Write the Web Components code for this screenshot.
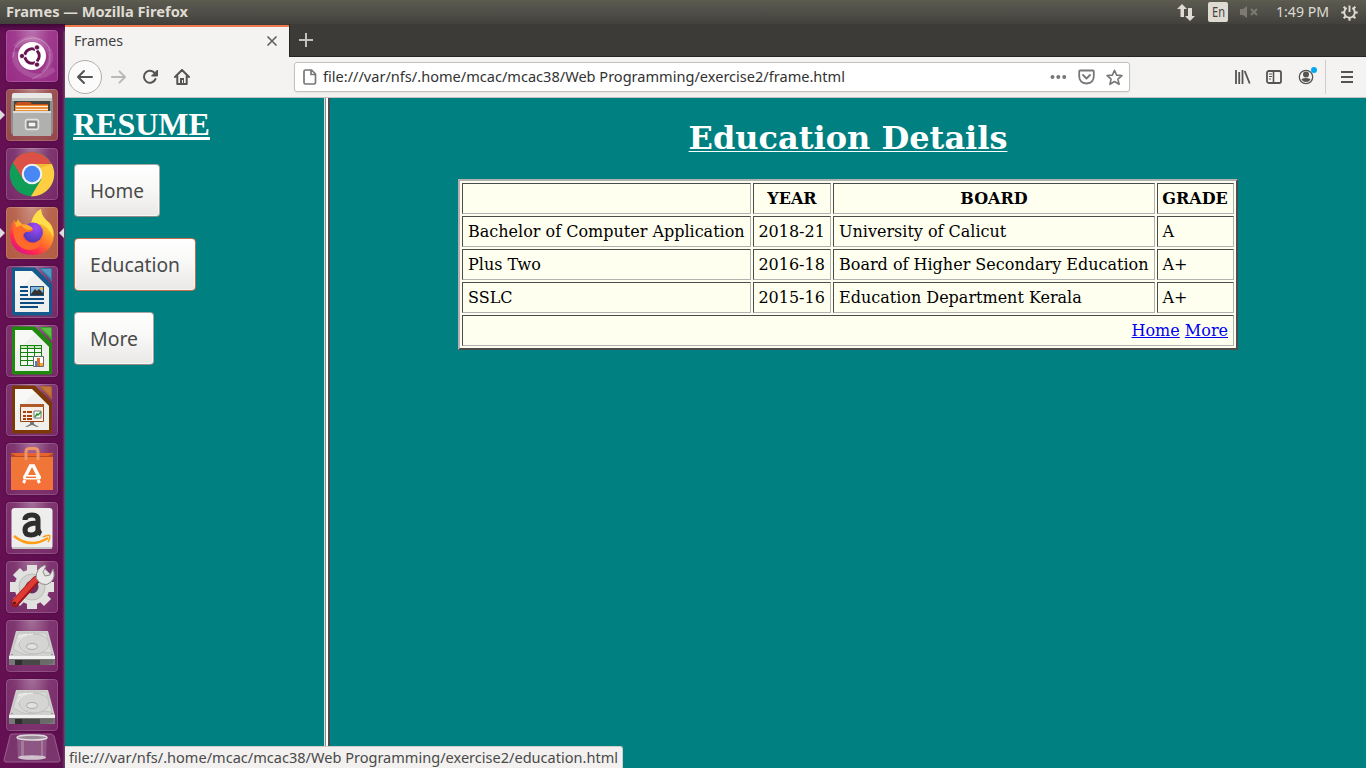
<!DOCTYPE html>
<html lang="en"><head><meta charset="utf-8"><title>Frames</title>
<style>html,body{margin:0;width:1366px;height:768px;overflow:hidden;background:#008080}</style></head>
<body><desktop-screen></desktop-screen>
<script>
function define(name, html, setup){
  const t=document.createElement('template'); t.innerHTML=html;
  customElements.define(name, class extends HTMLElement{
    connectedCallback(){
      if(this.shadowRoot) return;
      this.attachShadow({mode:'open'}).append(t.content.cloneNode(true));
      if(setup) setup(this,this.shadowRoot);
    }
  });
}

/* Label whose natural width is scaled to the width given in "w". */
define('fit-text', `<style>
:host{display:block;font-family:"Noto Sans","Open Sans",sans-serif;white-space:nowrap;flex:none}
span{display:inline-block;transform-origin:0 50%}</style><span><slot></slot></span>`,
(h,r)=>{
  const w=+h.getAttribute('w'), s=r.querySelector('span');
  h.style.width=w+'px';
  const n=s.offsetWidth; if(n) s.style.transform='scaleX('+(w/s.getBoundingClientRect().width)+')';
});

define('top-panel', `<style>
:host{display:flex;align-items:center;height:24px;box-sizing:border-box;padding:0 8px 0 6px;background:linear-gradient(#5f5d50 0,#5a594f 2px,#504f48 50%,#42413b 100%);color:#dfdbd2;font-size:14px}
fit-text{line-height:24px}
.sp{flex:1} svg{display:block;flex:none}
.en{width:20px;height:20px;border-radius:2px;background:#dfdbd2;color:#45443e;font-size:14px;display:flex;justify-content:center;margin:0 12px 0 13px}
.en fit-text{line-height:19px}
.time{margin:0 12px 0 18px;font-size:14px}
</style>
<fit-text w="182" style="font-weight:700">Frames — Mozilla Firefox</fit-text><div class="sp"></div>
<svg width="18" height="18" viewBox="0 0 18 18" fill="#dfdbd2"><path d="M5 1 10 6H7V14H3.500V6H0zM11 5h4v8h3l-5 5-5-5h3z"/></svg>
<div class="en"><fit-text w="13">En</fit-text></div>
<svg width="18" height="14" viewBox="0 0 18 14" fill="#7c7a72"><path d="M0 4h3l4-3v12l-4-3H0z"/><path d="m11 4 6 6m0-6-6 6" stroke="#7c7a72" stroke-width="2"/></svg>
<fit-text class="time" w="53">1:49 PM</fit-text>
<svg width="17" height="17" viewBox="0 0 18 18" fill="none" stroke="#dfdbd2"><path d="M6 4.300a5.600 5.600 0 1 0 6 0M9 1.500v7" stroke-width="2"/><path d="M2.800 2.800l2 2M15.200 2.800l-2 2M.3 9h3M14.700 9h3M2.800 15.200l2-2M15.200 15.200l-2-2M9 14.700v3" stroke-width="2.200"/></svg>`);

define('launcher-tile', `<style>
:host{display:block;flex:none;position:relative;width:52px;height:52px;box-sizing:border-box;border-radius:4px;background:radial-gradient(ellipse at 50% -5%,rgba(255,255,255,.38),rgba(255,255,255,.12) 48%,rgba(255,255,255,.05) 100%),var(--tint,#6f1c5e);box-shadow:inset 0 0 0 1px rgba(255,255,255,.16),0 0 2px rgba(30,0,30,.35)}
::slotted(svg){display:block;width:52px;height:52px}
.l,.r{display:none;position:absolute;top:21px;border:5px solid transparent}
.l{left:-6px;border-left-color:#ddd;border-right:0}.r{right:-6px;border-right-color:#ddd;border-left:0}
:host([open]) .l,:host([focused]) .r{display:block}
</style><slot></slot><i class="l"></i><i class="r"></i>`);

const drive=`<svg viewBox="0 0 52 52"><path d="M10 11h32l7 26v6q0 2-2 2H5q-2 0-2-2v-6z" fill="#d0d0cf"/><path d="M3 37h46v6q0 2-2 2H5q-2 0-2-2z" fill="#777"/><path d="M3 36h46v3H3z" fill="#f1f1ef"/><path d="M9 40h38v3l-8 2H9z" fill="#6a6a69"/><path d="M9 40h7v5H9z" fill="#2f2f2f"/><path d="M16 40h18v5H16z" fill="#484848"/><path d="M12 13h28l6 20q-9-2-16 1-9 2-15-1L7 29z" fill="#dadad9" stroke="#c2c2c0"/><ellipse cx="28" cy="24" rx="15" ry="10" fill="#d5d5d4" stroke="#c0c0be"/><ellipse cx="26" cy="26.500" rx="5.500" ry="3" fill="#e2e2e1" stroke="#aaa"/><path d="M12 17l9-3M12 23q3-8 15-9" fill="none" stroke="#f3f3f2"/><circle cx="6" cy="34.500" r=".8" fill="#888"/><circle cx="46" cy="34.500" r=".8" fill="#888"/></svg>`;
const doc=(c,d,f,inner)=>`<svg viewBox="0 0 52 52"><path d="M8 2h21l17 17v29q0 2-2 2H8q-2 0-2-2V4q0-2 2-2z" transform="translate(0 -.5)" fill="${c}"/><path d="M9 5h17l17 17v24H9z" fill="#f8f8f7"/><path d="M9 28 29 8l14 14v24H9z" fill="#e9e9e8" opacity=".65"/><path d="M33 2h11q2 0 2 2v12z" fill="${d}"/><path d="M35 3h10v9z" fill="${f}" opacity=".4"/>${inner}</svg>`;

define('unity-launcher', `<style>
:host{display:flex;flex-direction:column;align-items:center;gap:7px;width:65px;box-sizing:border-box;padding:6px 2px 0 1px;overflow:hidden;background:linear-gradient(#3c0834 0,#5d0c4f 5px,transparent 9px),linear-gradient(90deg,#651052,#5c0e4f 62px,#65335c 64px,#7b4870 65px)}
.trash{width:58px;height:32px;margin-top:-5px;display:block;flex:none}
</style>
<launcher-tile style="--tint:#92207f"><svg viewBox="0 0 52 52"><g fill="none" stroke="#fff" opacity=".13" stroke-width="5"><path d="M9 17Q24 2 38 14t-1 29" /><path d="M9 22Q6 35 20 43t28-4"/></g><path d="M7 27Q8 8 28 8 42 10 44 22M44 23Q46 42 26 49" fill="none" stroke="#fff" opacity=".25"/><circle cx="26" cy="26" r="14" fill="#fff"/><circle cx="26" cy="26" r="7.200" fill="none" stroke="#68134f" stroke-width="3"/><path d="M26 26 15 24.500v3zM26 26 31 16l2.500 1.500zM26 26l5 10 2.500-1.500z" fill="#fff"/><circle cx="26" cy="26" r="5.500" fill="#fff"/><g fill="#68134f" stroke="#fff" stroke-width=".8"><circle cx="16" cy="26" r="2.600"/><circle cx="31" cy="17.400" r="2.600"/><circle cx="31" cy="34.600" r="2.600"/></g></svg></launcher-tile>
<launcher-tile open style="--tint:#8f3d40"><svg viewBox="0 0 52 52"><path d="M6 6q0-2 2-2h36q2 0 2 2l1 7v31l-2 2H7l-2-2V13z" fill="#8f8f8d"/><path d="M6 6q0-2 2-2h36q2 0 2 2v3H6z" fill="#e8e8e6"/><path d="M6 9h40v3H6z" fill="#c2c2c0"/><path d="M8 12h36v10H8z" fill="#434340"/><path d="M9 15l3-2h12l2 2h16v7H9z" fill="#c8501a"/><path d="M9 16h33v6H9z" fill="#ee8d38"/><path d="M10 17h32v1H10zM10 20h32v1H10z" fill="#fff1d9"/><path d="M7 22h38v25H7z" fill="#b0b0af"/><path d="M7 22h38v2H7z" fill="#dcdcdb"/><rect x="19.500" y="30.500" width="13" height="10" rx="2" fill="#aaa" stroke="#e1e1e0" stroke-width="1.500"/><rect x="22" y="33" width="8" height="5" fill="#f4f4f2" stroke="#555"/></svg></launcher-tile>
<launcher-tile><svg viewBox="0 0 52 52"><circle cx="26" cy="26" r="22.300" fill="#109d58"/><path d="M26 26 6.900 14.500A22.300 22.300 0 0 1 45.500 16z" fill="#dd5045"/><path d="M26 16h19.800A22.300 22.300 0 0 1 25 48.300L35.500 31z" fill="#ffcd41"/><path d="M6.900 14.500 17 31l9-15z" fill="#dd5045"/><path d="M26 16h20l-12 4z" fill="#d9a528" opacity=".45"/><circle cx="26" cy="26" r="10.300" fill="#f1f1f1"/><circle cx="26" cy="26" r="8.200" fill="#4788f4"/></svg></launcher-tile>
<launcher-tile open focused style="--tint:#ae5138"><svg viewBox="0 0 52 52"><defs><linearGradient id="ff" x1=".9" y1=".1" x2=".3" y2="1"><stop stop-color="#ffe64b"/><stop offset=".3" stop-color="#ffb02b"/><stop offset=".58" stop-color="#ff6a2d"/><stop offset=".82" stop-color="#ff2852"/><stop offset="1" stop-color="#e01584"/></linearGradient><radialGradient id="gl" cx=".65" cy=".25" r=".8"><stop stop-color="#a14cf5"/><stop offset="1" stop-color="#4a36b4"/></radialGradient></defs><path d="M8 13l2 6q3-2 6-2l8 2 3-6q3-7 8-11 0 6 5 11 8 5 8 15Q46 48 26 48 5 47 4 28 4 19 8 13z" fill="url(#ff)"/><path d="M25 16q3-11 10-14 0 6 5 11 8 6 7 17-2-5-5-8-4-6-17-6z" fill="#ffdf49"/><circle cx="27" cy="25.500" r="10" fill="url(#gl)"/><path d="M7 20q5-4 11-2 3 2 6 2l3 3q-2 2-7 2-4 2-3 6 4 6 12 5 6-2 7-8 1 14-12 15-17-1-17-23z" fill="#ff6b2b"/><path d="M8 13l2 7 7-2-4-4-1-2-2 4zM15 18q8-2 12 4l-4 1q-4 0-8-5z" fill="#ffac2c"/></svg></launcher-tile>
<launcher-tile>${doc('#155a8c','#2f7aab','#8fc9e5','<g fill="#0d4c82"><path d="M14 20h8v2h-8zM14 24h8v2h-8zM14 28h8v2h-8zM14 32h24v2H14zM14 36h24v2H14zM14 40h18v2H14z"/></g><path d="M24 20h14v10H24z" fill="#215580"/><path d="M25 21h12v8H25z" fill="#86bade"/><path d="M25 28l4-5 2 2 2-2 4 4v2H25z" fill="#333"/><circle cx="35.500" cy="22.500" r="1.500" fill="#f6bd36"/>')}</launcher-tile>
<launcher-tile>${doc('#1d8a0c','#36a324','#9ae487','<path d="M14 20h22v21H14z" fill="#168011"/><g fill="#f2f8ef"><path d="M15 24h6v3h-6zM22 24h6v3h-6zM29 24h6v3h-6zM15 28h6v3h-6zM22 28h6v3h-6zM29 28h6v3h-6zM15 32h6v3h-6zM22 32h6v3h-6zM15 36h6v4h-6zM22 36h6v4h-6z"/></g><path d="M15 21h6v2h-6zM22 21h6v2h-6zM29 21h6v2h-6z" fill="#c5e7ba"/><path d="M27.500 31.500h10v10h-10z" fill="#fff" stroke="#666"/><path d="M29 36h2v5h-2z" fill="#268dd5"/><path d="M31 33h3v8h-3z" fill="#e5682e"/><path d="M34 38h3v3h-3z" fill="#ecb41c"/>')}</launcher-tile>
<launcher-tile>${doc('#7c3908','#b06229','#d79660','<path d="M14.500 20.500h23v17h-23z" fill="#f9eee7" stroke="#99430e"/><path d="M14 20h24v3H14z" fill="#ae5928"/><g fill="#a6430d"><path d="M17 27h3v2h-3zM17 31h3v2h-3zM17 34h3v2h-3zM21 27h5v2h-5zM21 31h5v2h-5zM21 34h5v2h-5z"/></g><path d="M28 27h7v7h-7z" fill="#fff" stroke="#777"/><path d="M29 33l2-3 1 1 3-3" stroke="#229a29" stroke-width="1.500" fill="none"/><path d="M24 38h4v2l5 3h-2l-5-2-5 2h-2l5-3z" fill="#777"/>')}</launcher-tile>
<launcher-tile><svg viewBox="0 0 52 52"><path d="M5 10h42v37H5z" fill="#e9642c"/><path d="M5 10l5 3h32l5-3v4H5z" fill="#b34b24"/><path d="M5 14h42v23H5z" fill="#ef7636"/><path d="M5 37h42v10H5z" fill="#f4713a"/><path d="M20 17V9q0-3.500 3.500-3.500h5Q32 5.500 32 9v8" fill="none" stroke="#ef946a" stroke-width="3"/><path d="M19.500 33l5-10h3l5 10" stroke="#fff" stroke-width="3.500" fill="none"/><rect x="17" y="32" width="18" height="4.500" rx="2" fill="#fff"/><path d="M20 34.300h10" stroke="#ef7034" stroke-width="1.400"/><path d="M19 37l-1.500 3M32 37l1.500 3" stroke="#fff" stroke-width="3"/></svg></launcher-tile>
<launcher-tile><svg viewBox="0 0 52 52"><rect x="5.500" y="6" width="41" height="41" rx="3" fill="#eeeeed"/><path d="M6 45h40v1q0 1-1 1H7q-1 0-1-1z" fill="#c6c6c6"/><path d="M19 18q0-5 7-5 6 0 6 5v3q-13 0-13 7 0 5 6 5 6 0 7-5V18M32 27q1 4 3 5" fill="none" stroke="#2e2e2c" stroke-width="5"/><path d="M8 34q16 13 34 2" fill="none" stroke="#ff9e16" stroke-width="2.500"/><path d="M37 35q6-3 7-1 0 3-2 6" fill="none" stroke="#ff9e16" stroke-width="1.500"/></svg></launcher-tile>
<launcher-tile><svg viewBox="0 0 52 52"><g transform="translate(26 26)"><g fill="#e1e1df"><circle r="17.500"/><rect x="-5" y="-22" width="10" height="44"/><rect x="-5" y="-22" width="10" height="44" transform="rotate(45)"/><rect x="-5" y="-22" width="10" height="44" transform="rotate(90)"/><rect x="-5" y="-22" width="10" height="44" transform="rotate(135)"/></g><circle r="13" fill="#d4d4d2" stroke="#bcbcba"/><circle r="6.500" fill="#6f2d61"/></g><path d="M9 42 30 19" stroke="#9b191c" stroke-width="8" stroke-linecap="round"/><path d="M9 41 29 19" stroke="#df3b34" stroke-width="5.500" stroke-linecap="round"/><circle cx="8.500" cy="42" r="1.600" fill="#5f1716"/><path d="M30 17q0-10 9-13l1 1-3 6 2 4 5-1 3-6q3 8-2 13-4 4-9 2l-3-2z" fill="#e8e8e6" stroke="#8b8b89"/></svg></launcher-tile>
<launcher-tile>${drive}</launcher-tile><launcher-tile>${drive}</launcher-tile>
<svg class="trash" viewBox="0 0 58 32"><path d="M9 1h39q2 0 3 2l6 24q0 2-2 2H3q-2 0-2-2L7 3q0-2 2-2z" fill="#7d3a70" stroke="#a06796" opacity=".9"/><path d="M14 4h30l-1 21q-14 4-28 0z" fill="#8d5683"/><path d="M18 8h3v16h-3zM38 8h2v16h-2z" fill="#c5a2bf" opacity=".45"/><ellipse cx="29" cy="4.500" rx="15" ry="2.600" fill="#9c8b99" stroke="#e1dce0" stroke-width="1.500"/><ellipse cx="29" cy="24.500" rx="14" ry="2.300" fill="#cfc2cd"/></svg>`);

define('tab-strip', `<style>
:host{display:flex;height:33px;background:#3c3b37;box-sizing:border-box}
.tab{width:224px;box-sizing:border-box;height:33px;margin-top:1px;border-top:2px solid #f0794b;background:#f4f3f2;padding:0 11px 2px 9px;display:flex;align-items:center;justify-content:space-between;color:#3f3f3e;font-size:14px}
.tab svg{margin-top:-1px}
.plus{flex:1;height:33px;border-left:1px solid #252421;border-bottom:1px solid #252421;box-sizing:border-box;padding:9px 0 0 9px}svg{display:block}
fit-text{line-height:28px;margin-top:-2px}
</style><div class="tab"><fit-text w="49">Frames</fit-text><svg width="12" height="12" viewBox="0 0 12 12"><path d="m1.500 1.500 9 9m0-9-9 9" stroke="#605f5e" stroke-width="1.600"/></svg></div>
<div class="plus"><svg width="15" height="15"><path d="M7 0v14M0 7h14" stroke="#c4c2bd" stroke-width="2"/></svg></div>`);

define('nav-bar', `<style>
:host{display:flex;align-items:center;height:41px;box-sizing:border-box;background:#f4f3f2;border-bottom:1px solid #c3c2c1;padding-left:3px}
svg{display:block;flex:none}
.back{width:34px;height:34px;border:1px solid #afaeac;border-radius:50%;background:#fbfbfb;box-sizing:border-box;display:grid;place-items:center}
.url{width:836px;height:30px;box-sizing:border-box;border:1px solid #c3c1be;border-radius:3px;background:#fff;box-shadow:0 1px 2px #0001;margin-left:104px;display:flex;align-items:center;padding:0 6px 0 8px;color:#333;font-size:14px}
.url fit-text{margin-left:6px;line-height:30px}.sp{flex:1}
.sep{width:1px;height:34px;background:#cfcecc;margin-left:8px}
</style>
<div class="back"><svg width="18" height="16" viewBox="0 0 18 16" fill="none" stroke="#555452" stroke-width="2" stroke-linecap="round" stroke-linejoin="round"><path d="M16 8H2m6-6L2 8l6 6"/></svg></div>
<svg style="margin-left:8px" width="17" height="16" viewBox="0 0 18 16" fill="none" stroke="#b9b8b6" stroke-width="2" stroke-linecap="round" stroke-linejoin="round"><path d="M2 8h14m-6-6 6 6-6 6"/></svg>
<svg style="margin-left:15px" width="17" height="16" viewBox="0 0 17 16"><path d="M13 4.500A6 6 0 1 0 13.500 10" fill="none" stroke="#555452" stroke-width="2" stroke-linecap="round"/><path d="M15.500 1v6h-6z" fill="#555452" stroke="#555452"/></svg>
<svg style="margin-left:15px" width="16" height="16" viewBox="0 0 16 16"><path d="m1 8 7-7 7 7M3.300 7v8h9.400V7" fill="none" stroke="#555452" stroke-width="2" stroke-linecap="round" stroke-linejoin="round"/><path d="M6 9h4v5H6z" fill="#555452"/><path d="M8 11h1v3H8z" fill="#f4f3f2"/></svg>
<div class="url"><svg width="14" height="16" viewBox="0 0 14 16" fill="none" stroke="#777" stroke-width="1.700" stroke-linejoin="round"><path d="M2.500 1h6l4 4v8.500q0 1.500-1.500 1.500H2.500Q1 15 1 13.500v-11Q1 1 2.500 1zM8 1v4.500h4.500"/></svg>
<fit-text w="522">file:///var/nfs/.home/mcac/mcac38/Web Programming/exercise2/frame.html</fit-text><div class="sp"></div>
<svg width="17" height="6" fill="#777"><circle cx="2.500" cy="3" r="2"/><circle cx="8.300" cy="3" r="2"/><circle cx="14.200" cy="3" r="2"/></svg>
<svg style="margin-left:11px" width="17" height="16" viewBox="0 0 17 16" fill="none" stroke="#777" stroke-width="1.800" stroke-linecap="round" stroke-linejoin="round"><path d="M2 1.500h13q.8 0 .8 1V7q0 7-7.300 7.500Q1.200 14 1.200 7V2.500q0-1 .8-1zM5 6l3.500 3.500L12 6"/></svg>
<svg style="margin-left:11px" width="17" height="17" viewBox="0 0 17 17" fill="none" stroke="#777" stroke-width="1.600" stroke-linejoin="round"><path d="m8.500 1.300 2.100 4.800 5.300.5-4 3.500 1.200 5.200-4.600-2.800-4.600 2.800 1.200-5.200-4-3.500 5.300-.5z"/></svg></div>
<svg style="margin-left:105px" width="16" height="14" viewBox="0 0 16 14" fill="none" stroke="#555452" stroke-width="1.800"><path d="M1 0v14M4.200 2v12M7.500 0v14M9.700 1l5 12.500"/></svg>
<svg style="margin-left:15px" width="16" height="14" viewBox="0 0 16 14" fill="none" stroke="#555452"><rect x="1" y="1" width="14" height="12" rx="1.800" stroke-width="1.800"/><path d="M7.500 1v12" stroke-width="1.600"/><path d="M3 4h3M3 6.500h3M3 9h2"/></svg>
<svg style="margin-left:16px" width="19" height="20" viewBox="0 0 19 20"><circle cx="8" cy="10" r="6.700" fill="none" stroke="#555452" stroke-width="1.300"/><circle cx="8" cy="7.500" r="3" fill="#555452"/><path d="M3.500 12q4-2 9 0-1 3-4.500 3t-4.500-3z" fill="#555452"/><circle cx="16" cy="3" r="3" fill="#00a8f5"/></svg>
<div class="sep"></div>
<svg style="margin-left:15px" width="12" height="12" fill="none" stroke="#555452" stroke-width="2"><path d="M0 1h12M0 6h12M0 11h12"/></svg>`);

define('menu-button', `<style>
:host{display:block;width:max-content;height:53px;box-sizing:border-box;border:1px solid #aaa5a0;border-bottom-color:#918c87;border-radius:4px;background:linear-gradient(#fff,#f8f8f7 45%,#e9e8e7);box-shadow:inset 0 0 0 1px #fff9;padding:0 15px;font-size:20px;color:#4a4a49}
:host([active]){border-color:#c06f47}
::slotted(fit-text){line-height:51px}
</style><slot></slot>`);

define('side-frame', `<style>
:host{display:block;width:259px;box-sizing:border-box;padding:8px;background:#008080}
h1{font:700 32px/36px "Liberation Serif",serif;color:#fff;margin:0 0 22px;text-decoration:underline}
nav{display:flex;flex-direction:column;gap:21px;padding-left:1px}
</style><h1>RESUME</h1><nav><menu-button><fit-text w="54">Home</fit-text></menu-button><menu-button active><fit-text w="90">Education</fit-text></menu-button><menu-button><fit-text w="48">More</fit-text></menu-button></nav>`);

define('content-frame', `<style>
:host{display:block;flex:1;background:#008080;font:16px/19px "DejaVu Serif",serif;color:#000}
h1{font:700 32px/37px "DejaVu Serif",serif;color:#fff;text-align:center;margin:22px 0;text-decoration:underline;text-decoration-thickness:1px;text-underline-offset:2px}
table{table-layout:fixed;width:780px;margin:0 auto;border:2px solid;border-color:#b2b2b2 #4c4c4c #4c4c4c #b2b2b2;border-spacing:2px;background:#fffff0}
td,th{border:1px solid;border-color:#4c4c4c #b2b2b2 #b2b2b2 #4c4c4c;padding:5px;height:19px;line-height:19px;white-space:nowrap}
td:nth-child(2),td:nth-child(4){padding-left:4.400px}th:last-child{padding:5px 5px 5px 4px}
a{color:#00e}td[colspan]{text-align:right}
</style><h1>Education Details</h1>
<table><colgroup><col style="width:289px"><col style="width:78px"><col style="width:322px"><col style="width:77px"></colgroup>
<tr><th></th><th>YEAR</th><th>BOARD</th><th>GRADE</th></tr>
<tr><td>Bachelor of Computer Application</td><td>2018-21</td><td>University of Calicut</td><td>A</td></tr>
<tr><td>Plus Two</td><td>2016-18</td><td>Board of Higher Secondary Education</td><td>A+</td></tr>
<tr><td>SSLC</td><td>2015-16</td><td>Education Department Kerala</td><td>A+</td></tr>
<tr><td colspan="4"><a href="#">Home</a> <a href="#">More</a></td></tr></table>`);

define('status-tip', `<style>
:host{display:block;position:absolute;left:0;bottom:0;height:22px;width:558px;box-sizing:border-box;background:#f2f1f0;border:1px solid #cfcecc;border-left:0;border-bottom:0;border-radius:0 3px 0 0;padding-left:4px;font-size:14px;color:#4a4a49}
fit-text{line-height:21px}
</style><fit-text w="549">file:///var/nfs/.home/mcac/mcac38/Web Programming/exercise2/education.html</fit-text>`);

define('browser-window', `<style>
:host{display:flex;flex-direction:column;flex:1;position:relative}
.frames{flex:1;display:flex}
.bar{width:6px;background:linear-gradient(90deg,#dcdcdc 1px,#8c8c8c 1px 2px,#fff 2px 4px,#4c4c4c 4px)}
</style><tab-strip></tab-strip><nav-bar></nav-bar><div class="frames"><side-frame></side-frame><div class="bar"></div><content-frame></content-frame></div><status-tip></status-tip>`);

define('desktop-screen', `<style>
:host{display:flex;flex-direction:column;width:1366px;height:768px;overflow:hidden}
.row{display:flex;flex:1;min-height:0}
</style><top-panel></top-panel><div class="row"><unity-launcher></unity-launcher><browser-window></browser-window></div>`);
</script></body></html>
